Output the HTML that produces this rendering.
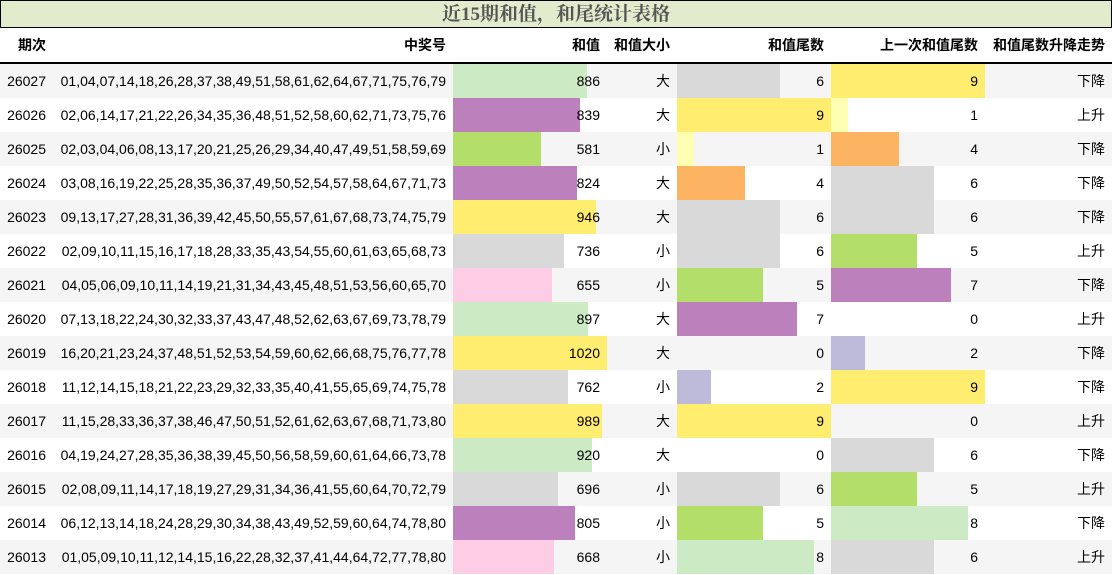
<!DOCTYPE html><html><head><meta charset="utf-8"><style>
body{margin:0;width:1112px;height:575px;overflow:hidden;background:#fff;font-family:"Liberation Sans","Noto Sans CJK SC",sans-serif;font-size:14px;color:#000}
.title{position:absolute;left:0;top:0;width:1110px;height:26px;border:1px solid #000;background:#e2ebcc;text-align:center;line-height:27px;font-size:19px;font-weight:bold;color:#555;font-family:"Liberation Serif","Noto Serif CJK SC",serif}
table{position:absolute;left:0;top:28px;border-collapse:collapse;table-layout:fixed}
td,th{padding:0 7px 0 0;text-align:right;white-space:nowrap;position:relative}
th{height:35px;font-weight:bold;border-bottom:2px solid #000;box-sizing:border-box}
td{height:34px}
tr.g td{background:#f5f5f5}
.b{position:absolute;left:0;top:0;height:34px;z-index:0}
td span{position:relative;z-index:1}
</style></head><body>
<div class="title">近15期和值，和尾统计表格</div>
<table>
<colgroup><col style="width:53px"><col style="width:400px"><col style="width:154px"><col style="width:70px"><col style="width:154px"><col style="width:154px"><col style="width:127px"></colgroup>
<tr><th>期次</th><th>中奖号</th><th>和值</th><th>和值大小</th><th>和值尾数</th><th>上一次和值尾数</th><th>和值尾数升降走势</th></tr>
<tbody id="tb"></tbody>
</table>
<script>
var d=[["26027","01,04,07,14,18,26,28,37,38,49,51,58,61,62,64,67,71,75,76,79",886,"#ccebc5","大",6,9,"下降"],
["26026","02,06,14,17,21,22,26,34,35,36,48,51,52,58,60,62,71,73,75,76",839,"#bc80bd","大",9,1,"上升"],
["26025","02,03,04,06,08,13,17,20,21,25,26,29,34,40,47,49,51,58,59,69",581,"#b3de69","小",1,4,"下降"],
["26024","03,08,16,19,22,25,28,35,36,37,49,50,52,54,57,58,64,67,71,73",824,"#bc80bd","大",4,6,"下降"],
["26023","09,13,17,27,28,31,36,39,42,45,50,55,57,61,67,68,73,74,75,79",946,"#ffed6f","大",6,6,"下降"],
["26022","02,09,10,11,15,16,17,18,28,33,35,43,54,55,60,61,63,65,68,73",736,"#d9d9d9","小",6,5,"上升"],
["26021","04,05,06,09,10,11,14,19,21,31,34,43,45,48,51,53,56,60,65,70",655,"#fccde5","小",5,7,"下降"],
["26020","07,13,18,22,24,30,32,33,37,43,47,48,52,62,63,67,69,73,78,79",897,"#ccebc5","大",7,0,"上升"],
["26019","16,20,21,23,24,37,48,51,52,53,54,59,60,62,66,68,75,76,77,78",1020,"#ffed6f","大",0,2,"下降"],
["26018","11,12,14,15,18,21,22,23,29,32,33,35,40,41,55,65,69,74,75,78",762,"#d9d9d9","小",2,9,"下降"],
["26017","11,15,28,33,36,37,38,46,47,50,51,52,61,62,63,67,68,71,73,80",989,"#ffed6f","大",9,0,"上升"],
["26016","04,19,24,27,28,35,36,38,39,45,50,56,58,59,60,61,64,66,73,78",920,"#ccebc5","大",0,6,"下降"],
["26015","02,08,09,11,14,17,18,19,27,29,31,34,36,41,55,60,64,70,72,79",696,"#d9d9d9","小",6,5,"上升"],
["26014","06,12,13,14,18,24,28,29,30,34,38,43,49,52,59,60,64,74,78,80",805,"#bc80bd","小",5,8,"下降"],
["26013","01,05,09,10,11,12,14,15,16,22,28,32,37,41,44,64,72,77,78,80",668,"#fccde5","小",8,6,"上升"]];
var c={0:"",1:"#ffffb3",2:"#bebada",4:"#fdb462",5:"#b3de69",6:"#d9d9d9",7:"#bc80bd",8:"#ccebc5",9:"#ffed6f"};
function bar(w,col){return w>0&&col?'<div class="b" style="width:'+w+'px;background:'+col+'"></div>':''}
var h="";d.forEach(function(r,i){
h+='<tr class="'+(i%2==0?'g':'')+'"><td>'+r[0]+'</td><td>'+r[1]+'</td><td>'+bar(Math.round(154*r[2]/1020),r[3])+'<span>'+r[2]+'</span></td><td>'+r[4]+'</td><td>'+bar(Math.round(154*r[5]/9),c[r[5]])+'<span>'+r[5]+'</span></td><td>'+bar(Math.round(154*r[6]/9),c[r[6]])+'<span>'+r[6]+'</span></td><td>'+r[7]+'</td></tr>';});
document.getElementById("tb").innerHTML=h;
</script>
</body></html>
